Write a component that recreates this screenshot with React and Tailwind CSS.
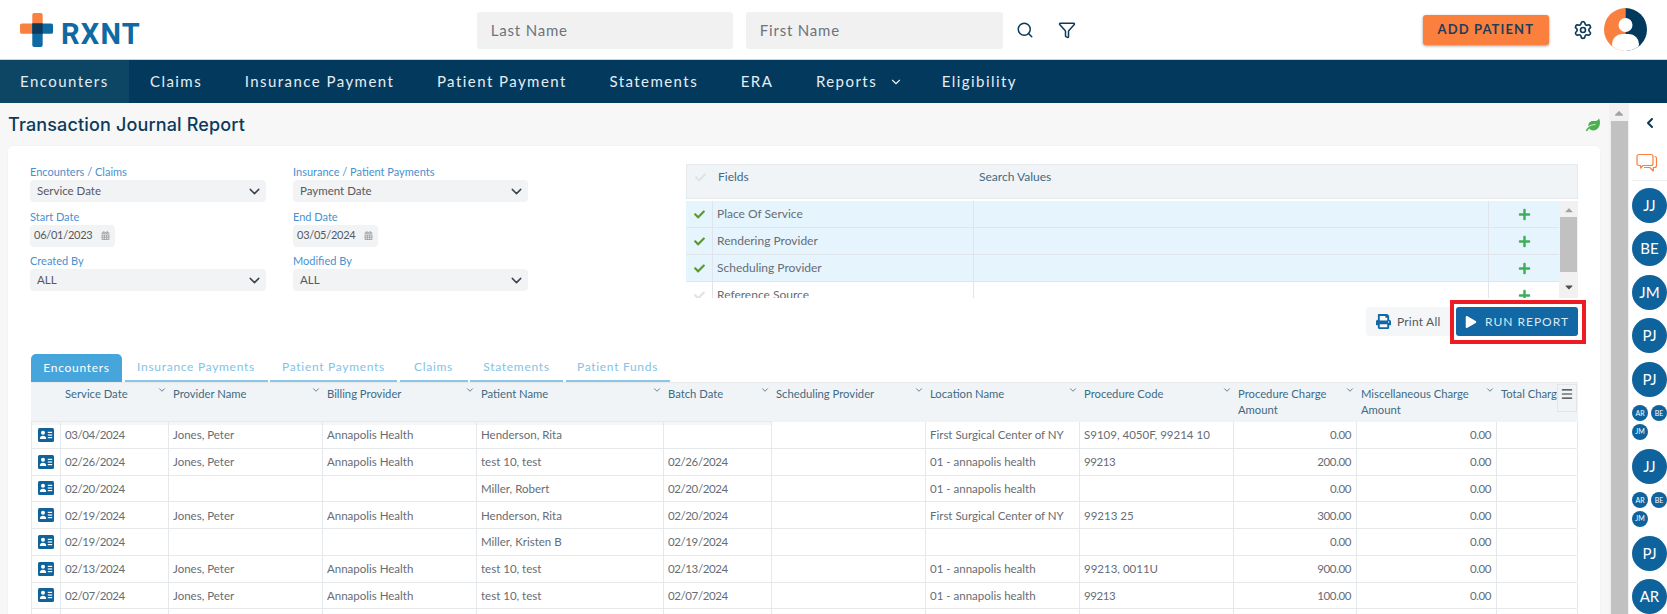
import React from 'react';
import { Search, Filter, Settings, ChevronDown, ChevronLeft, Menu } from 'lucide-react';
import { FaCheck, FaPlus, FaPrint, FaPlay, FaLeaf, FaCalendarAlt, FaCaretUp, FaCaretDown } from 'react-icons/fa';

const navItems = ['Encounters', 'Claims', 'Insurance Payment', 'Patient Payment', 'Statements', 'ERA', 'Reports', 'Eligibility'];

const tabs = [
  { label: 'Insurance Payments', w: 'w-[143px]' },
  { label: 'Patient Payments', w: 'w-[127px]' },
  { label: 'Claims', w: 'w-[68px]' },
  { label: 'Statements', w: 'w-[93px]' },
  { label: 'Patient Funds', w: 'w-[104px]' },
];

const columns = [
  'Service Date', 'Provider Name', 'Billing Provider', 'Patient Name', 'Batch Date', 'Scheduling Provider',
  'Location Name', 'Procedure Code', 'Procedure Charge Amount', 'Miscellaneous Charge Amount', 'Total Charge',
];

const rows = [
  ['03/04/2024', 'Jones, Peter', 'Annapolis Health', 'Henderson, Rita', '', '', 'First Surgical Center of NY', 'S9109, 4050F, 99214 10', '0.00', '0.00', ''],
  ['02/26/2024', 'Jones, Peter', 'Annapolis Health', 'test 10, test', '02/26/2024', '', '01 - annapolis health', '99213', '200.00', '0.00', ''],
  ['02/20/2024', '', '', 'Miller, Robert', '02/20/2024', '', '01 - annapolis health', '', '0.00', '0.00', ''],
  ['02/19/2024', 'Jones, Peter', 'Annapolis Health', 'Henderson, Rita', '02/20/2024', '', 'First Surgical Center of NY', '99213 25', '300.00', '0.00', ''],
  ['02/19/2024', '', '', 'Miller, Kristen B', '02/19/2024', '', '', '', '0.00', '0.00', ''],
  ['02/13/2024', 'Jones, Peter', 'Annapolis Health', 'test 10, test', '02/13/2024', '', '01 - annapolis health', '99213, 0011U', '900.00', '0.00', ''],
  ['02/07/2024', 'Jones, Peter', 'Annapolis Health', 'test 10, test', '02/07/2024', '', '01 - annapolis health', '99213', '100.00', '0.00', ''],
  ['', '', '', '', '', '', '', '', '', '', ''],
];

const gridCols = 'grid grid-cols-[30px_108px_154px_154px_187px_108px_154px_154px_154px_123px_140px_81px]';

function Logo() {
  return (
    <div className="flex items-center">
      <svg width="34" height="34" viewBox="0 0 36 36" className="shrink-0">
        <path d="M13 2a2 2 0 0 1 2-2h7a2 2 0 0 1 2 2v20H13V22H2a2 2 0 0 1-2-2v-7a2 2 0 0 1 2-2h11z" fill="#f9803f" />
        <path d="M13 11h20a2 2 0 0 1 2 2v7a2 2 0 0 1-2 2H24v12a2 2 0 0 1-2 2h-7a2 2 0 0 1-2-2z" fill="#0f6aa3" />
        <rect x="13" y="11" width="11" height="11" fill="#0d3a5c" />
      </svg>
      <span className="ml-[7px] mt-[10px] font-['Roboto',sans-serif] font-bold text-[29px] leading-none tracking-[1.2px] text-[#0f6aa3]">RXNT</span>
    </div>
  );
}

function Avatar() {
  return (
    <svg width="43" height="43" viewBox="0 0 43 43" className="shrink-0">
      <defs>
        <clipPath id="avatarClip"><circle cx="21.5" cy="21.5" r="21.5" /></clipPath>
      </defs>
      <g clipPath="url(#avatarClip)">
        <rect width="21.5" height="43" fill="#f9803f" />
        <rect x="21.5" width="21.5" height="43" fill="#04395e" />
        <circle cx="21.5" cy="17" r="7" fill="#fff" />
        <rect x="8" y="26" width="27" height="20" rx="10" fill="#fff" />
      </g>
    </svg>
  );
}

function ChatIcon() {
  return (
    <svg width="22" height="22" viewBox="0 0 22 22" fill="none" stroke="#f9803f" strokeWidth="1.2" strokeLinejoin="round">
      <path d="M3 1.5h12a2 2 0 0 1 2 2v7a2 2 0 0 1-2 2H7l-2.500 2.500V12.500H3a2 2 0 0 1-2-2v-7a2 2 0 0 1 2-2z" />
      <path d="M18.500 3.500a2 2 0 0 1 2 2v7a2 2 0 0 1-2 2h-1.200V18l-3.500-3.500H8" />
    </svg>
  );
}

function CardIcon() {
  return (
    <svg width="16" height="14" viewBox="0 0 16 14">
      <rect width="16" height="14" rx="1.500" fill="#0f639d" />
      <circle cx="5" cy="4.800" r="2" fill="#fff" />
      <path d="M1.800 11c0-2.200 1.400-3.200 3.200-3.200s3.200 1 3.200 3.200z" fill="#fff" />
      <rect x="9.800" y="3.800" width="4.400" height="1.200" fill="#fff" />
      <rect x="9.800" y="6.400" width="4.400" height="1.200" fill="#fff" />
      <rect x="9.800" y="9" width="4.400" height="1.200" fill="#fff" />
    </svg>
  );
}

function Circle({ text }) {
  return (
    <div className="w-[35px] h-[35px] rounded-full bg-[#0f639d] text-white text-[15px] flex items-center justify-center shrink-0">
      {text}
    </div>
  );
}

function SmallCircle({ text }) {
  return (
    <div className="w-[16px] h-[16px] rounded-full bg-[#0f639d] text-white text-[7px] flex items-center justify-center">
      {text}
    </div>
  );
}

function SmallGroup() {
  return (
    <div className="flex flex-wrap gap-x-[3px] gap-y-[2px] w-[35px] h-[35px] shrink-0">
      <SmallCircle text="AR" />
      <SmallCircle text="BE" />
      <SmallCircle text="JM" />
    </div>
  );
}

function Label({ children }) {
  return <div className="text-[11px] leading-[14px] text-[#4a90d0]">{children}</div>;
}

function SelectBox({ label, value }) {
  return (
    <div>
      <Label>{label}</Label>
      <div className="mt-[1px] h-[22px] rounded-[4px] bg-[#f1f3f5] flex items-center justify-between pl-[7px] pr-[3px] text-[11.5px] text-[#55595f]">
        <span>{value}</span>
        <ChevronDown size={17} className="text-[#3c4250]" />
      </div>
    </div>
  );
}

function DateBox({ label, value }) {
  return (
    <div>
      <Label>{label}</Label>
      <div className="mt-[1px] h-[22px] w-[85px] rounded-[4px] bg-[#f1f3f5] flex items-center pl-[4px] text-[11px] tracking-[-0.25px] text-[#55595f]">
        <span>{value}</span>
        <FaCalendarAlt size={9} className="ml-[8px] text-[#a5a9ac]" />
      </div>
    </div>
  );
}

function FieldRow({ label, on }) {
  return (
    <div className={`flex h-[27px] border-b border-[#dfe5ea] text-[12px] text-[#666d75] ${on ? 'bg-[#e6f4fd]' : 'bg-white'}`}>
      <div className="w-[27px] border-r border-[#dfe5ea] flex items-center justify-center">
        <FaCheck size={11} className={on ? 'text-[#5a9a2c]' : 'text-[#dfe3e5]'} />
      </div>
      <div className="w-[261px] border-r border-[#dfe5ea] flex items-center pl-[4px]">{label}</div>
      <div className="w-[515px] border-r border-[#dfe5ea]" />
      <div className="flex-1 flex items-center justify-center">
        <FaPlus size={13} className="text-[#3fae5a]" />
      </div>
    </div>
  );
}

function FieldsPanel() {
  return (
    <div className="w-[892px] h-[134px] overflow-hidden">
      <div className="h-[35px] bg-[#f1f4f6] border border-[#e6eaec] flex text-[12px] text-[#3d6a85]">
        <div className="w-[26px] flex justify-center pt-[7px]">
          <FaCheck size={11} className="text-[#dfe3e5]" />
        </div>
        <div className="w-[261px] pl-[5px] pt-[3px]">Fields</div>
        <div className="pl-[5px] pt-[3px]">Search Values</div>
      </div>
      <div className="flex mt-[2px]">
        <div className="flex-1">
          <FieldRow label="Place Of Service" on />
          <FieldRow label="Rendering Provider" on />
          <FieldRow label="Scheduling Provider" on />
          <FieldRow label="Reference Source" />
        </div>
        <div className="w-[19px] h-[97px] bg-[#f1f1f1] flex flex-col items-center">
          <FaCaretUp size={12} className="text-[#a3a3a3] mt-[3px]" />
          <div className="w-[17px] h-[55px] bg-[#c1c1c1] mt-[1px]" />
          <FaCaretDown size={12} className="text-[#505050] mt-[9px]" />
        </div>
      </div>
    </div>
  );
}

function ReportTable() {
  return (
    <div className="relative w-[1546px]">
      <div className={`${gridCols} text-[11.25px]`}>
        <div className="h-[40px] bg-[#f1f4f6] border-t border-[#e6eaec] border-b border-b-[#e6eaec] shadow-[0_3px_0_#f5f6f7]" />
        {columns.map((col, i) => (
          <div
            key={col}
            className={`h-[40px] bg-[#f1f4f6] border-t border-[#e6eaec] pl-[4px] pt-[3px] flex justify-between leading-[16px] text-[#3d6a85] overflow-hidden ${i < 5 ? 'border-b border-b-[#e6eaec] shadow-[0_3px_0_#f5f6f7]' : ''}`}
          >
            <span className={i === 10 ? 'whitespace-nowrap' : ''}>{col}</span>
            {i < 10 && <ChevronDown size={10} className="shrink-0 mr-[2px] -mt-[1px] text-[#4a6a80]" />}
          </div>
        ))}
      </div>
      <div className="absolute right-0 top-[2px] w-[20px] h-[28px] bg-[#f1f4f6] border border-[#e2e6e8] flex justify-center pt-[2px]">
        <Menu size={14} className="text-[#333]" />
      </div>
      {rows.map((row, r) => (
        <div key={r} className={`${gridCols} h-[26.75px] border-b border-[#e6e9eb] text-[11.5px] text-[#666d75]`}>
          <div className="border-l border-r border-[#e6e9eb] flex items-center justify-center">
            {row[0] && <CardIcon />}
          </div>
          {row.map((cell, i) => (
            <div
              key={i}
              className={`border-r border-[#e6e9eb] flex items-center whitespace-nowrap overflow-hidden ${i === 8 || i === 9 ? 'justify-end pr-[5px]' : 'pl-[4px]'} ${/^[\d/.]+$/.test(cell) ? 'tracking-[-0.4px]' : ''}`}
            >
              {cell}
            </div>
          ))}
        </div>
      ))}
    </div>
  );
}

export default function App() {
  return (
    <div className="w-[1667px] h-[614px] overflow-hidden bg-white font-['Lato',sans-serif] flex flex-col">
      {/* Top bar */}
      <header className="h-[60px] shrink-0 flex items-center pl-[20px] border-b border-[#c9d3da]">
        <Logo />
        <div className="ml-[336px] flex gap-[13px] mt-[1px]">
          <div className="w-[256px] h-[37px] rounded-[3px] bg-[#f1f1f1] flex items-center pl-[14px] text-[15px] tracking-[0.8px] text-[#6b7480]">Last Name</div>
          <div className="w-[257px] h-[37px] rounded-[3px] bg-[#f1f1f1] flex items-center pl-[14px] text-[15px] tracking-[0.8px] text-[#6b7480]">First Name</div>
        </div>
        <Search size={18} className="ml-[13px] text-[#0b3b5c]" />
        <Filter size={18} className="ml-[24px] text-[#0b3b5c]" />
        <button className="ml-[347px] w-[126px] h-[30px] rounded-[3px] bg-[#fb7f3d] shadow-[0_1px_3px_rgba(0,0,0,0.4)] text-[13px] font-bold tracking-[1.1px] text-[#1f3d5a]">ADD PATIENT</button>
        <Settings size={20} className="ml-[24px] text-[#0b3b5c]" />
        <div className="ml-[11px]"><Avatar /></div>
      </header>

      {/* Main nav */}
      <nav className="h-[43px] shrink-0 bg-[#04395e] flex text-[15px] tracking-[1.45px] text-[#e6edf2]">
        {navItems.map((item, i) => (
          <div key={item} className={`flex items-center ${i === 0 ? 'bg-[#0d4565] px-[20px]' : 'px-[21.3px]'}`}>
            {item}
            {item === 'Reports' && <ChevronDown size={14} className="ml-[12px] -mr-[4px]" />}
          </div>
        ))}
      </nav>

      <div className="flex-1 flex min-h-0">
        <main className="w-[1609px] bg-[#f7f7f7] px-[8px] overflow-hidden">
          <div className="h-[43px] flex items-center justify-between">
            <h1 className="font-['Inter',sans-serif] font-medium text-[18px] tracking-[0.15px] text-[#0b3b5c]">Transaction Journal Report</h1>
            <FaLeaf size={14} className="text-[#4caf50] mr-[1px]" />
          </div>

          {/* Report card */}
          <section className="w-[1592px] bg-white rounded-[5px] shadow-[0_0_2px_rgba(0,0,0,0.06)] pl-[22px] pr-[22px] pt-[18px] pb-[10px]">
            <div className="flex">
              <div className="w-[498px] mt-[1px] grid grid-cols-[236px_235px] gap-x-[27px] gap-y-[7.5px] self-start content-start">
                <SelectBox label="Encounters / Claims" value="Service Date" />
                <SelectBox label="Insurance / Patient Payments" value="Payment Date" />
                <DateBox label="Start Date" value="06/01/2023" />
                <DateBox label="End Date" value="03/05/2024" />
                <SelectBox label="Created By" value="ALL" />
                <SelectBox label="Modified By" value="ALL" />
              </div>
              <div className="ml-[158px]"><FieldsPanel /></div>
            </div>

            <div className="flex justify-end gap-[4px] mt-[9px]">
              <button className="w-[86px] h-[29px] rounded-[3px] bg-[#f4f6f7] flex items-center pl-[10px] gap-[6px] text-[12px] tracking-[0.2px] text-[#55595f]">
                <FaPrint size={15} className="text-[#1268a4]" />
                Print All
              </button>
              <div className="relative">
                <button className="w-[122px] h-[29px] rounded-[3px] bg-[#1268a4] flex items-center justify-center gap-[8px] text-[12px] tracking-[1px] text-[#dbe9f3]">
                  <FaPlay size={12} className="text-white" />
                  RUN REPORT
                </button>
                <div className="absolute -left-[6px] -right-[8px] -top-[7px] -bottom-[8px] border-[4px] border-[#ed1c24]" />
              </div>
            </div>

            {/* Tabs */}
            <div className="flex gap-[2.5px] mt-[18px] ml-[1px] h-[28px] text-[12px] tracking-[0.7px]">
              <div className="w-[91px] rounded-t-[5px] bg-[#46a5da] text-white flex items-center justify-center">Encounters</div>
              {tabs.map((t) => (
                <div key={t.label} className={`${t.w} border-b-2 border-[#8cc6e6] text-[#85c2e4] flex items-center justify-center`}>{t.label}</div>
              ))}
            </div>

            <div className="ml-[1px]"><ReportTable /></div>
          </section>
        </main>

        {/* Page scrollbar */}
        <div className="w-[20px] bg-[#f1f1f1] flex flex-col items-center">
          <FaCaretUp size={14} className="text-[#a3a3a3] mt-[3px]" />
          <div className="w-[17px] flex-1 bg-[#c1c1c1] mt-[1px]" />
        </div>

        {/* Right rail */}
        <aside className="w-[38px] bg-white flex flex-col pl-[3px]">
          <div className="h-[40px] flex items-center justify-center pt-[2px]">
            <ChevronLeft size={16} strokeWidth={3} className="text-[#0b3b4c]" />
          </div>
          <div className="h-[40px] flex items-center justify-center border-b border-[#eceeef] pt-[6px] pr-[6px]">
            <ChatIcon />
          </div>
          <div className="flex flex-col gap-[8.5px] mt-[7px]">
            <Circle text="JJ" />
            <Circle text="BE" />
            <Circle text="JM" />
            <Circle text="PJ" />
            <Circle text="PJ" />
            <SmallGroup />
            <Circle text="JJ" />
            <SmallGroup />
            <Circle text="PJ" />
            <Circle text="AR" />
          </div>
        </aside>
      </div>
    </div>
  );
}
